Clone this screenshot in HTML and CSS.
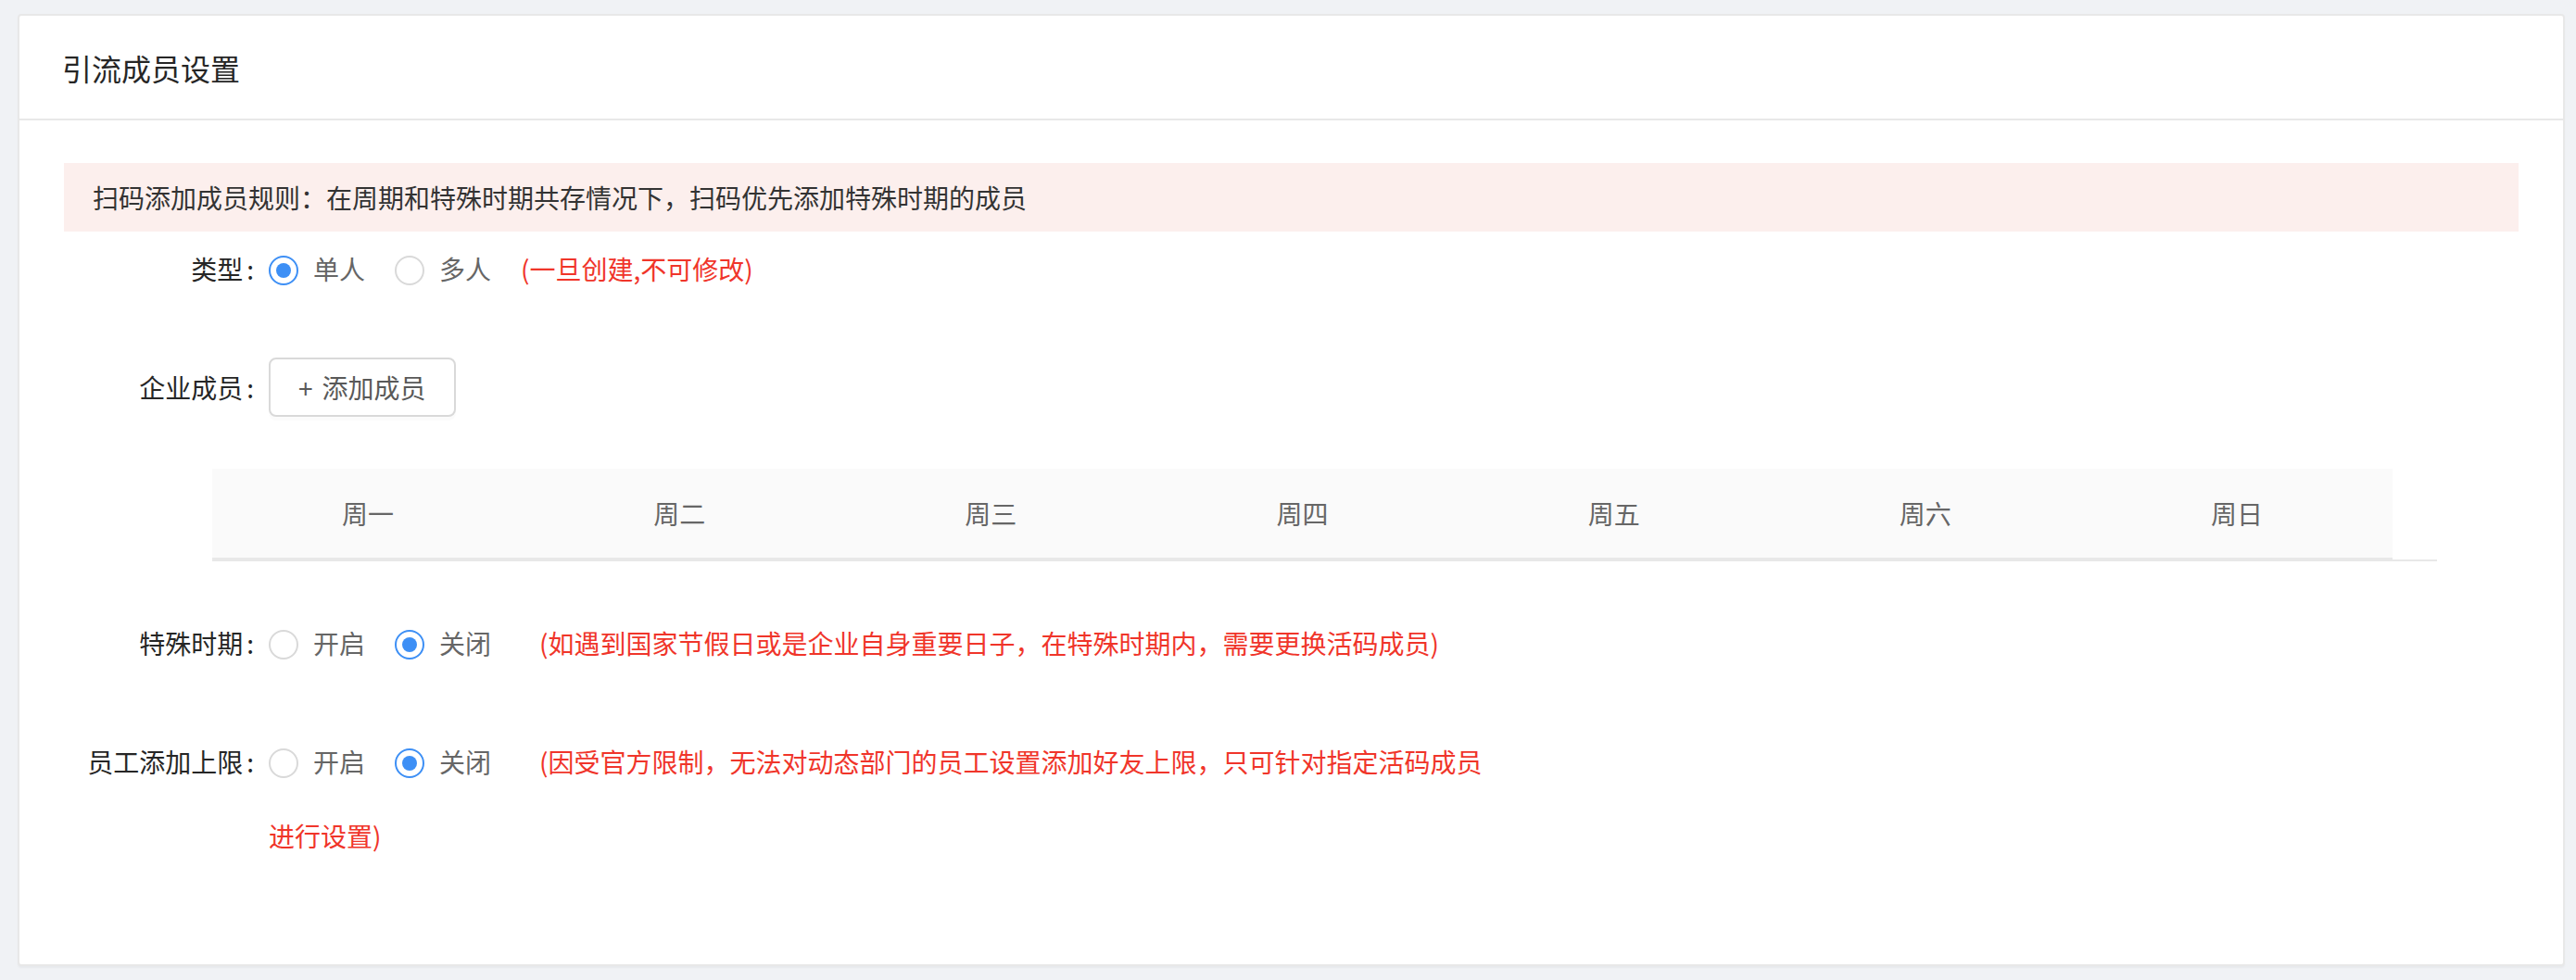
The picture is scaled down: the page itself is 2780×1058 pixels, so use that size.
FILE: index.html
```html
<!DOCTYPE html>
<html lang="zh-CN">
<head>
    <meta charset="UTF-8">
    <title>引流成员设置</title>
    <link rel="stylesheet" href="styles.css">
</head>
<body>
    <div class="card">
        <!-- 标题 -->
        <div class="card-head">引流成员设置</div>

        <div class="card-body">
            <div class="alert">扫码添加成员规则：在周期和特殊时期共存情况下，扫码优先添加特殊时期的成员</div>

            <!-- 类型 -->
            <div class="form-item">
                <label class="form-label">类型</label>
                <div class="form-control"><span class="radio"><span class="radio-inner checked"></span><span class="radio-text">单人</span></span><span class="radio"><span class="radio-inner"></span><span class="radio-text">多人</span></span><span class="tip">(一旦创建,不可修改)</span></div>
            </div>

            <!-- 企业成员 -->
            <div class="form-item">
                <label class="form-label">企业成员</label>
                <div class="form-control">
                    <button class="add-btn"><span class="plus">+</span>添加成员</button>
                </div>
            </div>

            <!-- 周期表 -->
            <div class="form-item">
                <div class="week-table">
                    <div class="week-head">
                        <div class="week-cell">周一</div>
                        <div class="week-cell">周二</div>
                        <div class="week-cell">周三</div>
                        <div class="week-cell">周四</div>
                        <div class="week-cell">周五</div>
                        <div class="week-cell">周六</div>
                        <div class="week-cell">周日</div>
                    </div>
                </div>
            </div>

            <!-- 特殊时期 -->
            <div class="form-item">
                <label class="form-label">特殊时期</label>
                <div class="form-control"><span class="radio"><span class="radio-inner"></span><span class="radio-text">开启</span></span><span class="radio"><span class="radio-inner checked"></span><span class="radio-text">关闭</span></span><span class="tip tip-gap">(如遇到国家节假日或是企业自身重要日子，在特殊时期内，需要更换活码成员)</span></div>
            </div>

            <!-- 员工添加上限 -->
            <div class="form-item">
                <label class="form-label">员工添加上限</label>
                <div class="form-control"><span class="radio"><span class="radio-inner"></span><span class="radio-text">开启</span></span><span class="radio"><span class="radio-inner checked"></span><span class="radio-text">关闭</span></span><span class="tip tip-gap">(因受官方限制，无法对动态部门的员工设置添加好友上限，只可针对指定活码成员进行设置)</span></div>
            </div>
        </div>
    </div>
</body>
</html>
```

FILE: styles.css
```css
/* 基础样式 */
* { margin: 0; padding: 0; box-sizing: border-box; font-family: 'Noto Sans CJK SC', 'Noto Sans', sans-serif; }
body { background: #f0f2f5; padding: 15px 12px 18px 19px; }

/* 卡片 */
.card { background: #fff; border: 2px solid #e8e8e8; border-radius: 4px; box-shadow: 0 2px 2px rgba(0,0,0,0.04); }
.card-head { height: 113px; padding: 0 46px; display: flex; align-items: center; font-size: 32px; color: #262626; border-bottom: 2px solid #e8e8e8; }
.card-body { padding: 46px 48px 51px; }

/* 提示条 */
.alert { height: 74px; padding: 0 31px; display: flex; align-items: center; background: #fcefed; color: #333; font-size: 28px; }

/* 表单 */
.form-item { display: flex; align-items: flex-start; line-height: 80px; font-size: 28px; margin-bottom: 48px; }
.form-label { width: 221px; flex-shrink: 0; text-align: right; color: #262626; }
.form-label::after { content: ':'; margin: 0 16px 0 4px; }
.form-control { width: 1326px; color: #595959; }

/* 单选框 */
.radio { display: inline-block; margin-right: 16px; white-space: nowrap; }
.radio-inner { display: inline-block; width: 32px; height: 32px; border: 2px solid #d9d9d9; border-radius: 50%; vertical-align: middle; position: relative; top: -2px; }
.radio-inner.checked { border-color: #3d8ff5; }
.radio-inner.checked::after { content: ''; position: absolute; left: 6px; top: 6px; width: 16px; height: 16px; border-radius: 50%; background: #3d8ff5; }
.radio-text { padding: 0 16px; color: #666; }

.tip { color: #f0352a; }
.tip-gap { margin-left: 20px; }

/* 添加按钮 */
.add-btn { height: 64px; margin-top: 8px; padding: 0 30px; border: 2px solid #d9d9d9; border-radius: 8px; background: #fff; color: #595959; font-size: 28px; line-height: 60px; vertical-align: top; box-shadow: 0 4px 0 rgba(0,0,0,0.015); cursor: pointer; }
.add-btn .plus { margin-right: 10px; }

/* 周期表 */
.week-table { margin-left: 160px; width: 2401px; border-bottom: 2px solid #e8e8e8; line-height: normal; }
.week-head { width: 2353px; height: 98px; display: grid; grid-template-columns: repeat(7, 1fr); background: #fafafa; border-bottom: 2px solid #e8e8e8; }
.week-cell { display: flex; align-items: center; justify-content: center; color: #666; font-size: 28px; }
```
